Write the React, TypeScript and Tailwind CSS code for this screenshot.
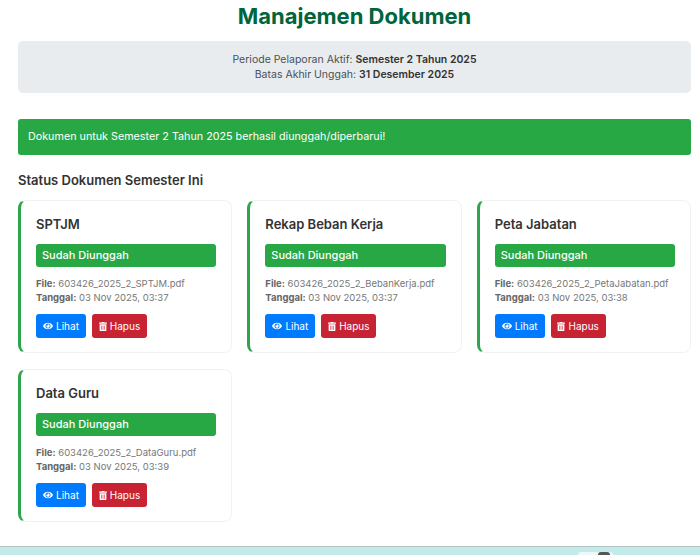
import { FaEye, FaTrashAlt } from 'react-icons/fa';

interface Doc {
  title: string;
  file: string;
  date: string;
}

const docs: Doc[] = [
  { title: 'SPTJM', file: '603426_2025_2_SPTJM.pdf', date: '03 Nov 2025, 03:37' },
  { title: 'Rekap Beban Kerja', file: '603426_2025_2_BebanKerja.pdf', date: '03 Nov 2025, 03:37' },
  { title: 'Peta Jabatan', file: '603426_2025_2_PetaJabatan.pdf', date: '03 Nov 2025, 03:38' },
  { title: 'Data Guru', file: '603426_2025_2_DataGuru.pdf', date: '03 Nov 2025, 03:39' },
];

function DocCard({ doc }: { doc: Doc }) {
  return (
    <div className="h-[153px] bg-white rounded-[8px] border border-[#f2f2f2] border-l-[3px] border-l-[#2ea44f] pt-[14px] pl-[15px] pr-[15px]">
      <h4 className="text-[13px] leading-[18px] font-semibold text-[#333]">{doc.title}</h4>
      <div className="mt-[11px] h-[23px] rounded-[3px] bg-[#28a745] text-white text-[11px] font-medium leading-[23px] pl-[6px]">
        Sudah Diunggah
      </div>
      <p className="mt-[10px] text-[9.5px] leading-[14px] text-[#777] whitespace-nowrap">
        <b className="font-bold text-[#666]">File:</b> {doc.file}
        <br />
        <b className="font-bold text-[#666]">Tanggal:</b> {doc.date}
      </p>
      <div className="mt-[9px] flex gap-[6px]">
        <button className="h-[24px] w-[50px] rounded-[3px] bg-[#007bff] text-white text-[10px] flex items-center justify-center gap-[3px]">
          <FaEye className="w-[10px] h-[10px]" />
          Lihat
        </button>
        <button className="h-[24px] w-[55px] rounded-[3px] bg-[#c82333] text-white text-[10px] flex items-center justify-center gap-[3px]">
          <FaTrashAlt className="w-[8px] h-[9px]" />
          Hapus
        </button>
      </div>
    </div>
  );
}

export default function App() {
  return (
    <div className="h-[555px] overflow-hidden bg-white flex flex-col font-['Inter',sans-serif] text-[#333]">
      <main className="flex-1 pl-[18px] pr-[9px]">
        <h2 className="text-center text-[22px] leading-[32px] font-bold text-[#00653b]">Manajemen Dokumen</h2>

        <div className="mt-[9px] h-[52px] rounded-[5px] bg-[#e9ecef] flex flex-col items-center justify-center text-[10.5px] leading-[15.5px] text-[#495057]">
          <p>
            Periode Pelaporan Aktif: <b className="font-semibold text-[#333]">Semester 2 Tahun 2025</b>
          </p>
          <p>
            Batas Akhir Unggah: <b className="font-semibold text-[#333]">31 Desember 2025</b>
          </p>
        </div>

        <div className="mt-[26px] h-[36px] rounded-[3px] bg-[#28a745] text-white text-[10.75px] leading-[36px] pl-[10px]">
          Dokumen untuk Semester 2 Tahun 2025 berhasil diunggah/diperbarui!
        </div>

        <h3 className="mt-[16px] text-[13px] leading-[18px] font-semibold text-[#333]">Status Dokumen Semester Ini</h3>

        <div className="mt-[11px] grid grid-cols-3 gap-x-[15px] gap-y-[16px]">
          {docs.map((doc) => (
            <DocCard key={doc.title} doc={doc} />
          ))}
        </div>
      </main>

      {/* potongan footer di bawah */}
      <footer className="h-[9px] shrink-0 border-t border-[#b5c4c4] bg-[#c2ebe9] flex justify-end items-end pr-[87px]">
        <div className="w-[35px] h-[3px] rounded-t-[3px] bg-[#eef8f8] flex justify-end pr-[3px]">
          <div className="w-[12px] h-[3px] rounded-t-full bg-[#555]" />
        </div>
      </footer>
    </div>
  );
}
